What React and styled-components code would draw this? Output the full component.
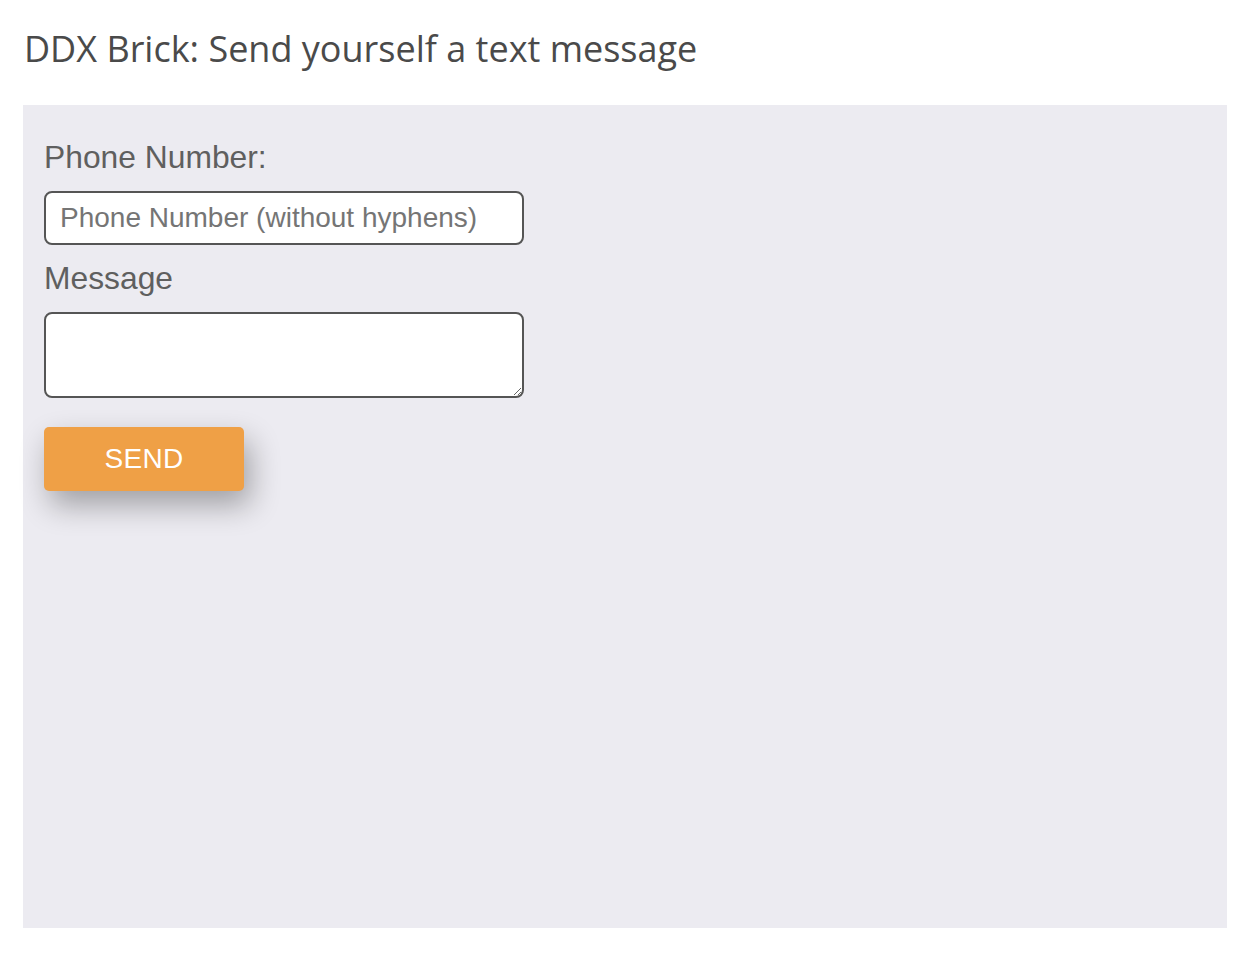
import styled, { createGlobalStyle } from 'styled-components';

const GlobalStyle = createGlobalStyle`
    body {
        margin: 0;
        background: #ffffff;
    }
`;

const Page = styled.div`
    padding: 0 23px;
    box-sizing: border-box;
    width: 1250px;
`;

const Title = styled.h1`
    margin: 0;
    padding: 26px 0 0 1px;
    height: 105px;
    box-sizing: border-box;
    font-family: 'Open Sans', sans-serif;
    font-weight: 400;
    font-size: 36px;
    line-height: 46px;
    color: #4a4a4a;
`;

const Panel = styled.div`
    background: #ecebf1;
    height: 823px;
    padding: 34px 21px;
    box-sizing: border-box;
`;

const Form = styled.form`
    display: flex;
    flex-direction: column;
    align-items: flex-start;
`;

const Label = styled.label`
    font-family: 'Liberation Sans', Arial, sans-serif;
    font-size: 31.8px;
    line-height: 36px;
    color: #5f5f5f;
    margin-bottom: 16px;
`;

const fieldStyles = `
    width: 480px;
    box-sizing: border-box;
    border: 2px solid #555555;
    border-radius: 8px;
    background: #ffffff;
    font-family: 'Liberation Sans', Arial, sans-serif;
    font-size: 28px;
    color: #333;
    outline: none;
`;

const Input = styled.input`
    ${fieldStyles}
    height: 54px;
    padding: 0 14px;
    margin-bottom: 15px;

    &::placeholder {
        color: #757575;
    }
`;

const TextArea = styled.textarea`
    ${fieldStyles}
    height: 86px;
    padding: 10px 14px;
    margin: 0 0 29px;
    resize: vertical;
    display: block;
`;

const SendButton = styled.button`
    width: 200px;
    height: 64px;
    border: none;
    border-radius: 5px;
    background: #efa046;
    color: #ffffff;
    font-family: 'Liberation Sans', Arial, sans-serif;
    font-size: 28px;
    letter-spacing: 0.3px;
    box-shadow: 6px 14px 30px rgba(0, 0, 0, 0.32);
    cursor: pointer;
`;

export default function App() {
    return (
        <>
            <GlobalStyle />
            <Page>
                <Title>DDX Brick: Send yourself a text message</Title>
                <Panel>
                    <Form onSubmit={(e) => e.preventDefault()}>
                        <Label htmlFor="phone">Phone Number:</Label>
                        <Input id="phone" type="text" placeholder="Phone Number (without hyphens)" />
                        <Label htmlFor="message">Message</Label>
                        <TextArea id="message" />
                        <SendButton type="submit">SEND</SendButton>
                    </Form>
                </Panel>
            </Page>
        </>
    );
}
